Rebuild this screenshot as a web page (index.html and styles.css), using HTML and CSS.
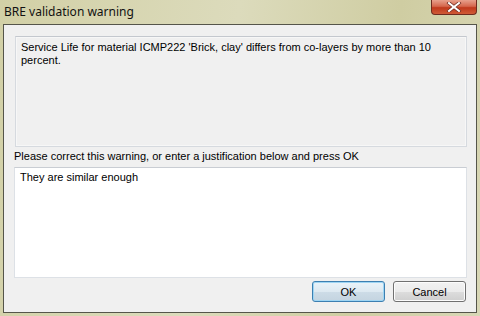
FILE: index.html
```html
<!DOCTYPE html>
<html lang="en">
<head>
    <meta charset="UTF-8">
    <title>BRE validation warning</title>
    <link rel="stylesheet" href="styles.css">
</head>
<body>
    <div class="window">
        <div class="titlebar">
            <span class="title">BRE validation warning</span>
            <div class="close-btn">
                <svg width="16" height="10" viewBox="0 0 16 10">
                    <path d="M3 1 L13 9 M13 1 L3 9" stroke="#6b2a20" stroke-width="3.4" stroke-linecap="square"/>
                    <path d="M3 1 L13 9 M13 1 L3 9" stroke="#fff" stroke-width="2" stroke-linecap="square"/>
                </svg>
            </div>
        </div>

        <div class="client">
            <div class="message-box">
                Service Life for material ICMP222 'Brick, clay' differs from co-layers by more than 10 percent.
            </div>

            <div class="prompt">Please correct this warning, or enter a justification below and press OK</div>

            <div class="justification">They are similar enough</div>

            <div class="buttons">
                <button class="btn btn-default">OK</button>
                <button class="btn">Cancel</button>
            </div>
        </div>
    </div>
</body>
</html>
```

FILE: styles.css
```css
* {
    box-sizing: border-box;
}

body {
    margin: 0;
    width: 480px;
    height: 316px;
    overflow: hidden;
    font-family: 'Liberation Sans', Arial, sans-serif;
    background: linear-gradient(100deg, #d2d0a6 0%, #dcdbbc 45%, #cfcda2 75%, #d8d7b6 100%);
}

.window {
    display: flex;
    flex-direction: column;
    height: 316px;
}

.titlebar {
    height: 24px;
    display: flex;
    align-items: flex-start;
}

.title {
    font-family: 'Noto Sans', 'Open Sans', sans-serif;
    font-size: 12px;
    color: #111;
    padding: 3px 0 0 4px;
}

.close-btn {
    margin-left: auto;
    margin-right: 3px;
    width: 46px;
    height: 15px;
    border: 1px solid #6e2b1f;
    border-top: none;
    border-radius: 0 0 4px 4px;
    background: linear-gradient(#e7a08c 0%, #d5674d 45%, #c0391c 55%, #cf5a36 100%);
    display: flex;
    align-items: center;
    justify-content: center;
}

.client {
    flex: 1;
    margin: 0 3px 3px 3px;
    border: 1px solid #55554a;
    background: #f0f0f0;
    padding: 11px 9px 0 10px;
    display: flex;
    flex-direction: column;
    font-size: 11px;
    color: #000;
}

.message-box {
    margin-left: 1px;
    height: 111px;
    border: 1px solid #d6dadf;
    border-top-color: #c4c8ce;
    box-shadow: inset 0 0 0 1px #f7f7f7;
    padding: 4px 5px;
    line-height: 13px;
}

.prompt {
    height: 20px;
    line-height: 19px;
}

.justification {
    height: 111px;
    background: #fff;
    border: 1px solid #dde1e6;
    border-top-color: #c9cdd3;
    padding: 3px 5px;
    line-height: 13px;
}

.buttons {
    display: flex;
    justify-content: flex-end;
    gap: 8px;
    padding-top: 3px;
    padding-right: 1px;
}

.btn {
    width: 73px;
    height: 21px;
    padding: 0;
    font-family: 'Liberation Sans', Arial, sans-serif;
    font-size: 11px;
    color: #000;
    border: 1px solid #707070;
    border-radius: 3px;
    background: linear-gradient(#f2f2f2 0%, #ebebeb 50%, #dddddd 51%, #cfcfcf 100%);
    box-shadow: inset 0 0 0 1px #fcfcfc;
}

.btn-default {
    border-color: #3c7fb1;
    background: linear-gradient(#eaf3f9 0%, #dde9f1 50%, #cddce7 51%, #c4d4e0 100%);
    box-shadow: inset 0 0 0 1px #9ed5f3;
}
```
